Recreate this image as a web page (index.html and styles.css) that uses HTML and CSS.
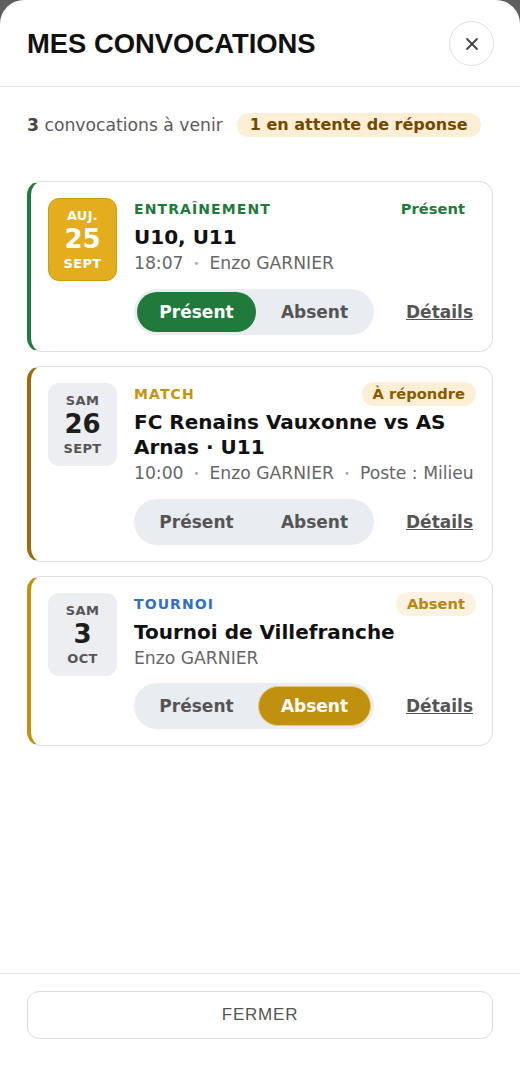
FILE: index.html
```html
<!DOCTYPE html>
<html lang="fr">
<head>
    <meta charset="UTF-8">
    <title>Mes convocations</title>
    <link rel="stylesheet" href="styles.css">
</head>
<body>

<div class="sheet">
    <header class="sheet-header">
        <h1>MES CONVOCATIONS</h1>
        <button class="close-btn" aria-label="Fermer">
            <svg width="14" height="14" viewBox="0 0 14 14">
                <path d="M2 2 L12 12 M12 2 L2 12" stroke="#444" stroke-width="1.8" stroke-linecap="round" fill="none"/>
            </svg>
        </button>
    </header>

    <main class="sheet-body">
        <div class="summary">
            <span><b>3</b> convocations à venir</span>
            <span class="pending">1 en attente de réponse</span>
        </div>

        <ol class="convocations">
            <li class="card training">
                <div class="date today">
                    <span class="day">AUJ.</span>
                    <span class="num">25</span>
                    <span class="month">SEPT</span>
                </div>
                <div class="info">
                    <div class="info-top">
                        <span class="type">ENTRAÎNEMENT</span>
                        <span class="status present">Présent</span>
                    </div>
                    <h2>U10, U11</h2>
                    <p class="meta">18:07<span class="dot">•</span>Enzo GARNIER</p>
                    <div class="actions">
                        <div class="toggle">
                            <button class="yes on-present">Présent</button>
                            <button class="no">Absent</button>
                        </div>
                        <a href="#" class="details">Détails</a>
                    </div>
                </div>
            </li>

            <li class="card match">
                <div class="date">
                    <span class="day">SAM</span>
                    <span class="num">26</span>
                    <span class="month">SEPT</span>
                </div>
                <div class="info">
                    <div class="info-top">
                        <span class="type">MATCH</span>
                        <span class="status waiting">À répondre</span>
                    </div>
                    <h2>FC Renains Vauxonne vs AS Arnas · U11</h2>
                    <p class="meta">10:00<span class="dot">•</span>Enzo GARNIER<span class="dot">•</span>Poste : Milieu</p>
                    <div class="actions">
                        <div class="toggle">
                            <button class="yes">Présent</button>
                            <button class="no">Absent</button>
                        </div>
                        <a href="#" class="details">Détails</a>
                    </div>
                </div>
            </li>

            <li class="card tournament">
                <div class="date">
                    <span class="day">SAM</span>
                    <span class="num">3</span>
                    <span class="month">OCT</span>
                </div>
                <div class="info">
                    <div class="info-top">
                        <span class="type">TOURNOI</span>
                        <span class="status absent">Absent</span>
                    </div>
                    <h2>Tournoi de Villefranche</h2>
                    <p class="meta">Enzo GARNIER</p>
                    <div class="actions">
                        <div class="toggle">
                            <button class="yes">Présent</button>
                            <button class="no on-absent">Absent</button>
                        </div>
                        <a href="#" class="details">Détails</a>
                    </div>
                </div>
            </li>
        </ol>
    </main>

    <footer class="sheet-footer">
        <button class="close-wide">FERMER</button>
    </footer>
</div>

</body>
</html>
```

FILE: styles.css
```css
body {
    margin: 0;
    background: #5f5f5f;
    font-family: "DejaVu Sans", sans-serif;
    color: #1a1a1a;
}

.sheet {
    display: flex;
    flex-direction: column;
    height: 100vh;
    background: #fff;
    border-radius: 24px 24px 0 0;
}

.sheet-header {
    display: flex;
    align-items: center;
    justify-content: space-between;
    padding: 21px 27px 20px 27px;
    border-bottom: 1px solid #e3e3e3;
}

.sheet-header h1 {
    margin: 0;
    font-family: "Liberation Sans", Arial, sans-serif;
    font-size: 27.4px;
    font-weight: bold;
    color: #111;
}

.close-btn {
    width: 45px;
    height: 45px;
    border-radius: 50%;
    border: 1px solid #e0e0e0;
    background: #fff;
    display: flex;
    align-items: center;
    justify-content: center;
    padding: 0;
    margin-right: -1px;
}

.sheet-body {
    flex: 1;
    padding: 26px 27px;
}

.summary {
    display: flex;
    align-items: center;
    gap: 14px;
    font-size: 17.2px;
    color: #5a5a5a;
}

.summary b {
    color: #444;
}

.pending {
    background: #fcefd5;
    color: #734800;
    font-weight: bold;
    font-size: 16px;
    line-height: 24px;
    padding: 0 13px;
    border-radius: 12px;
}

.convocations {
    list-style: none;
    margin: 44px 0 0 0;
    padding: 0;
    display: flex;
    flex-direction: column;
    gap: 14px;
}

.card {
    display: flex;
    gap: 17px;
    padding: 15px 16px 16px 17px;
    border: 1px solid #e0e0e0;
    border-left: 4px solid #1f7a3c;
    border-radius: 14px;
}

.card.match {
    border-left-color: #9c6c0c;
}

.card.tournament {
    border-left-color: #c2920d;
}

.date {
    flex: none;
    width: 69px;
    height: 83px;
    margin-top: 1px;
    box-sizing: border-box;
    border-radius: 11px;
    background: #eceef1;
    display: flex;
    flex-direction: column;
    align-items: center;
    justify-content: center;
    font-weight: bold;
    color: #555;
}

.date.today {
    background: #e4ad1d;
    border: 1px solid #cf9a12;
    color: #fff;
}

.date .day,
.date .month {
    font-size: 13px;
    line-height: 19px;
    letter-spacing: 0.3px;
}

.date .num {
    font-size: 26px;
    line-height: 29px;
    color: #1e1e1e;
}

.date.today .num {
    color: #fff;
}

.info {
    flex: 1;
    min-width: 0;
}

.info-top {
    display: flex;
    justify-content: space-between;
    align-items: center;
    height: 24px;
}

.type {
    font-size: 14px;
    font-weight: bold;
    letter-spacing: 1.1px;
    color: #1f7a3c;
}

.match .type {
    color: #c8920c;
}

.tournament .type {
    color: #2f6fc4;
}

.status {
    font-size: 14.7px;
    font-weight: bold;
    line-height: 24px;
    padding: 0 11px;
    border-radius: 12px;
}

.status.present {
    color: #1f7a3c;
}

.status.waiting {
    background: #fcefd5;
    color: #8a5a00;
}

.status.absent {
    background: #fcf2e2;
    color: #b8860b;
}

.info h2 {
    margin: 4px 0 0 0;
    font-size: 20px;
    line-height: 25px;
    color: #111;
}

.meta {
    margin: 1px 0 0 0;
    font-size: 17.2px;
    line-height: 24px;
    color: #666;
}

.dot {
    font-size: 10px;
    color: #aaa;
    margin: 0 10px;
    vertical-align: 2px;
}

.actions {
    display: flex;
    align-items: center;
    justify-content: space-between;
    margin-top: 13px;
}

.toggle {
    display: flex;
    gap: 2px;
    padding: 3px;
    background: #e9ecf0;
    border-radius: 23px;
}

.toggle button {
    height: 40px;
    border: none;
    border-radius: 20px;
    background: transparent;
    font-family: "DejaVu Sans", sans-serif;
    font-size: 17px;
    font-weight: bold;
    color: #555;
}

.toggle .yes {
    width: 119px;
}

.toggle .no {
    width: 113px;
}

.toggle button.on-present {
    background: #1f7a3c;
    color: #fff;
}

.toggle button.on-absent {
    background: #c0900f;
    border: 1px solid #e8c870;
    color: #fff;
}

.details {
    font-size: 17px;
    font-weight: bold;
    color: #555;
    padding-right: 3px;
}

.sheet-footer {
    border-top: 1px solid #e3e3e3;
    padding: 17px 27px 27px 27px;
}

.close-wide {
    width: 100%;
    height: 48px;
    background: #fff;
    border: 1px solid #dcdcdc;
    border-radius: 12px;
    font-family: "Liberation Sans", Arial, sans-serif;
    font-size: 17px;
    letter-spacing: 0.8px;
    color: #555;
}
```
